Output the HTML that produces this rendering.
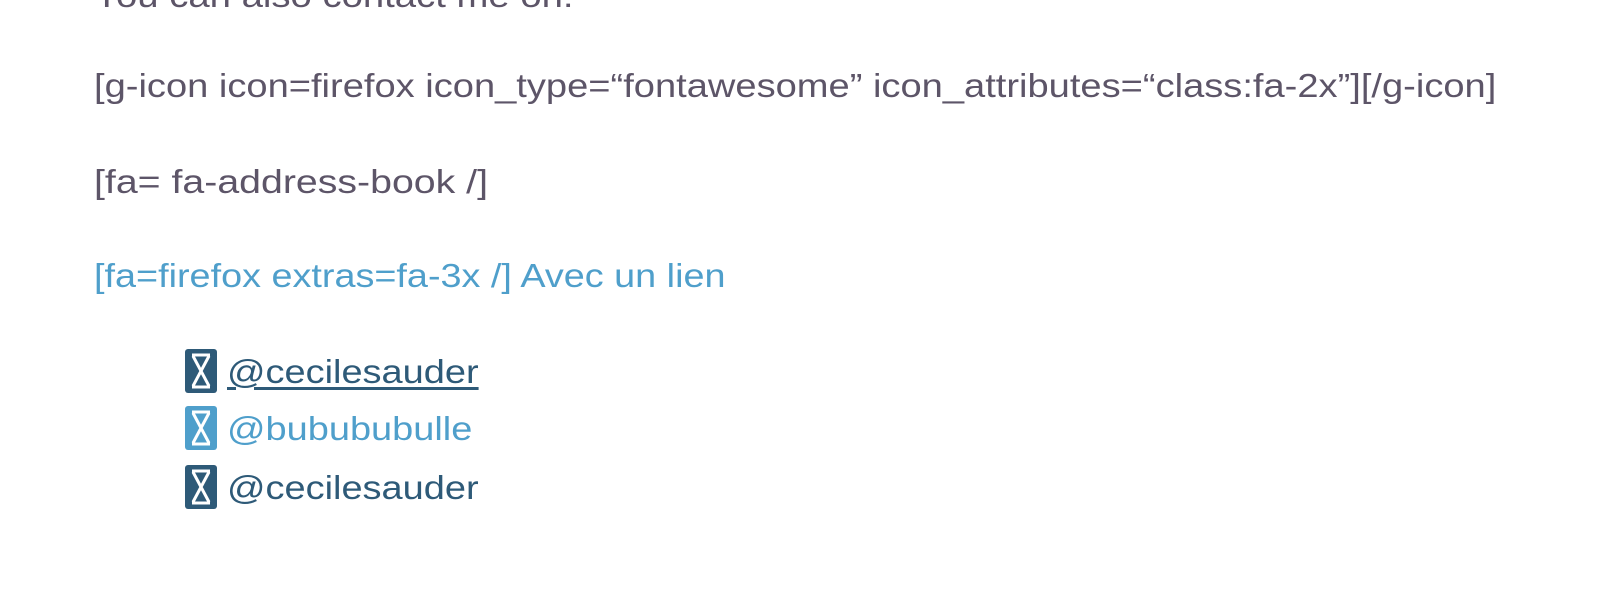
<!DOCTYPE html>
<html><head><meta charset="utf-8"><style>
body{margin:0;width:1600px;height:614px;background:#fff;overflow:hidden;position:relative;font-family:"Liberation Sans",sans-serif;color:#5d5568;font-size:33px}
.l{position:absolute;left:94px;white-space:nowrap;line-height:1;transform-origin:0 0}
.blue{color:#4f9fcb}
.dark{color:#2e5a78}
.it{position:absolute;left:184px;white-space:nowrap;line-height:1;display:flex;align-items:center}
.it svg{margin-right:9px}
.it span{display:inline-block;transform:scaleX(1.15);transform-origin:0 50%}
</style></head><body>
<div class="l" style="top:-21px;transform:scaleX(1.16)">You can also contact me on:</div>
<div class="l" style="top:69px;transform:scaleX(1.154)">[g-icon icon=firefox icon_type=“fontawesome” icon_attributes=“class:fa-2x”][/g-icon]</div>
<div class="l" style="top:165px;transform:scaleX(1.19)">[fa= fa-address-book /]</div>
<div class="l blue" style="top:259px;transform:scaleX(1.145)">[fa=firefox extras=fa-3x /] Avec un lien</div>
<div class="it dark" style="top:348px"><svg width="34" height="46" viewBox="0 0 34 46"><rect x="1" y="1" width="32" height="44" rx="3" fill="#2e5a78"/><path d="M8 7H26M8 39H26M9 8L25 38M25 8L9 38" stroke="#fff" stroke-width="3" fill="none"/></svg><span style="text-decoration:underline;text-underline-offset:4px">@cecilesauder</span></div>
<div class="it blue" style="top:405px"><svg width="34" height="46" viewBox="0 0 34 46"><rect x="1" y="1" width="32" height="44" rx="3" fill="#4f9fcb"/><path d="M8 7H26M8 39H26M9 8L25 38M25 8L9 38" stroke="#fff" stroke-width="3" fill="none"/></svg><span>@bubububulle</span></div>
<div class="it dark" style="top:464px"><svg width="34" height="46" viewBox="0 0 34 46"><rect x="1" y="1" width="32" height="44" rx="3" fill="#2e5a78"/><path d="M8 7H26M8 39H26M9 8L25 38M25 8L9 38" stroke="#fff" stroke-width="3" fill="none"/></svg><span>@cecilesauder</span></div>
</body></html>
